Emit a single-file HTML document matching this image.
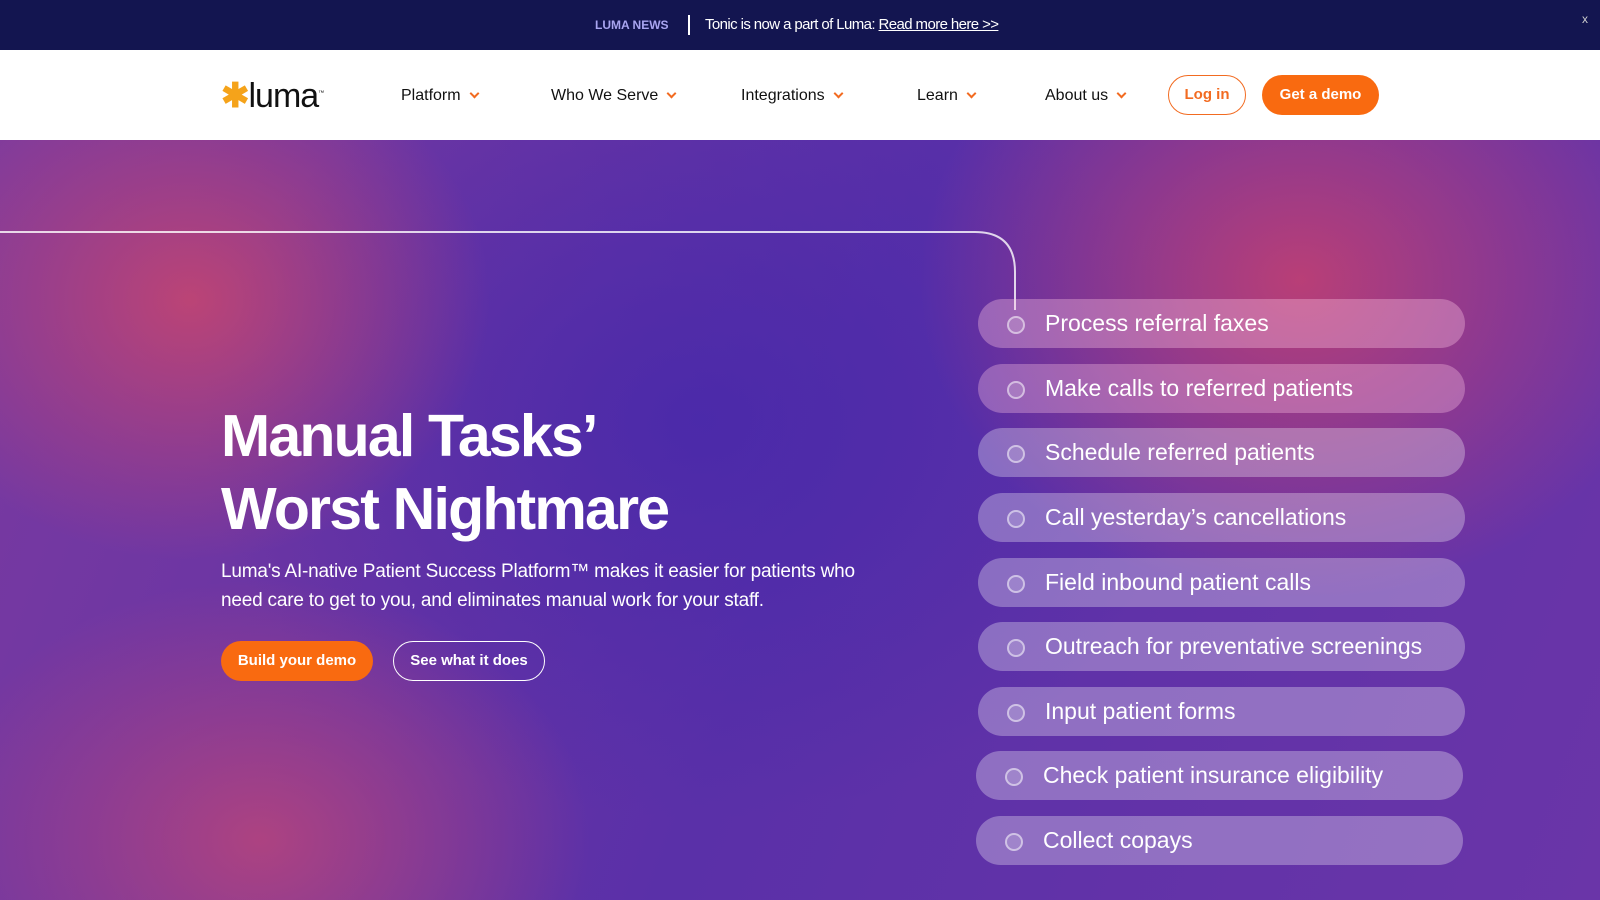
<!DOCTYPE html>
<html><head><meta charset="utf-8"><style>
*{margin:0;padding:0;box-sizing:border-box}
body{width:1600px;height:900px;overflow:hidden;font-family:"Liberation Sans",sans-serif;position:relative;background:#5a2fa0}
.top{position:absolute;left:0;top:0;width:1600px;height:50px;background:#131550;color:#fff;font-size:15px}
.top .n{position:absolute;left:595px;top:18px;font-size:12px;font-weight:bold;color:#a9a5f0}
.top .bar{position:absolute;left:688px;top:15px;width:2px;height:20px;background:#fff}
.top .t{position:absolute;left:705px;top:16px;letter-spacing:-.6px}
.top .x{position:absolute;right:12px;top:12px;font-size:12px;color:#ccc}
nav{position:absolute;top:50px;left:0;width:1600px;height:90px;background:#fff}
.logo{position:absolute;left:221px;top:26px;font-size:34px;color:#111;letter-spacing:-1px}
.item{position:absolute;top:37px;font-size:16px;color:#111}
.item:after{content:"";display:inline-block;width:5px;height:5px;border-right:2px solid #f26b21;border-bottom:2px solid #f26b21;transform:rotate(45deg);margin-left:10px;position:relative;top:-3px}
.btn{position:absolute;border-radius:21px;font-weight:bold;font-size:15px;text-align:center}
.hero{position:absolute;top:140px;left:0;width:1600px;height:760px;
background:radial-gradient(ellipse 300px 260px at 190px 160px,rgba(200,70,110,.85),transparent),
radial-gradient(ellipse 330px 260px at 260px 700px,rgba(190,70,120,.8),transparent),
radial-gradient(ellipse 380px 320px at 1300px 140px,rgba(200,65,110,.85),transparent),
radial-gradient(ellipse 500px 400px at 700px 280px,rgba(70,40,170,.8),transparent),
linear-gradient(110deg,#7a3aa0,#5a30a8 50%,#6a35a8)}
h1{position:absolute;left:221px;top:260px;color:#fff;font-size:59px;line-height:73px;font-weight:bold;letter-spacing:-1.8px}
p.d{position:absolute;left:221px;top:417px;color:#fff;font-size:19px;line-height:29px;width:640px;letter-spacing:-.2px}
.pill{position:absolute;left:978px;width:487px;height:49px;border-radius:25px;background:rgba(255,255,255,.3);color:#fff;font-size:23px;line-height:49px;padding-left:67px}
.pill:before{content:"";position:absolute;left:29px;top:17px;width:14px;height:14px;border:2px solid rgba(255,255,255,.5);border-radius:50%;background:rgba(255,255,255,.15)}
</style></head><body>
<div class="top"><span class="n">LUMA NEWS</span><span class="bar"></span><span class="t">Tonic is now a part of Luma: <u>Read more here &gt;&gt;</u></span><span class="x">x</span></div>
<nav>
<div class="logo"><span style="color:#f5a31a;font-weight:bold">✱</span>luma<sup style="font-size:6px">™</sup></div>
<span class="item" style="left:401px">Platform</span>
<span class="item" style="left:551px">Who We Serve</span>
<span class="item" style="left:741px">Integrations</span>
<span class="item" style="left:917px">Learn</span>
<span class="item" style="left:1045px">About us</span>
<div class="btn" style="left:1168px;top:25px;width:78px;height:40px;line-height:38px;border:1px solid #f26b21;color:#f26b21">Log in</div>
<div class="btn" style="left:1262px;top:25px;width:117px;height:40px;line-height:40px;background:#f96a10;color:#fff">Get a demo</div>
</nav>
<div class="hero">
<svg style="position:absolute;left:0;top:0" width="1600" height="760"><path d="M0 92 H975 Q1015 92 1015 132 V170" stroke="#fff" stroke-opacity=".8" stroke-width="2" fill="none"/></svg>
<h1>Manual Tasks’<br>Worst Nightmare</h1>
<p class="d">Luma's AI-native Patient Success Platform™ makes it easier for patients who need care to get to you, and eliminates manual work for your staff.</p>
<div class="btn" style="left:221px;top:501px;width:152px;height:40px;line-height:40px;background:#f96a10;color:#fff">Build your demo</div>
<div class="btn" style="left:393px;top:501px;width:152px;height:40px;line-height:38px;border:1px solid #fff;color:#fff">See what it does</div>
<div class="pill" style="top:159px;background:rgba(255,200,230,.35)">Process referral faxes</div>
<div class="pill" style="top:224px;background:rgba(255,200,230,.33)">Make calls to referred patients</div>
<div class="pill" style="top:288px">Schedule referred patients</div>
<div class="pill" style="top:353px">Call yesterday’s cancellations</div>
<div class="pill" style="top:418px">Field inbound patient calls</div>
<div class="pill" style="top:482px">Outreach for preventative screenings</div>
<div class="pill" style="top:547px">Input patient forms</div>
<div class="pill" style="top:611px;left:976px">Check patient insurance eligibility</div>
<div class="pill" style="top:676px;left:976px">Collect copays</div>
</div>
</body></html>
